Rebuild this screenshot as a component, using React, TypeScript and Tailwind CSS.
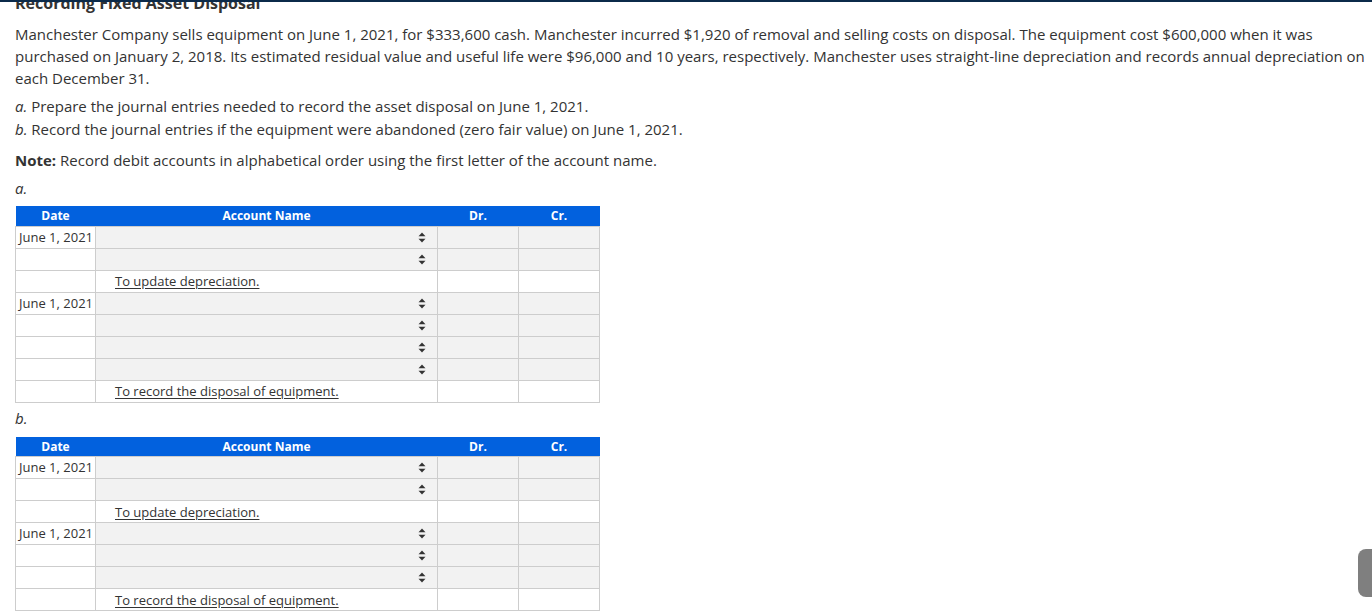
import React from "react";

type Row = { date?: string; kind: "select" | "memo"; memo?: string };

const tableA: Row[] = [
  { date: "June 1, 2021", kind: "select" },
  { kind: "select" },
  { kind: "memo", memo: "To update depreciation." },
  { date: "June 1, 2021", kind: "select" },
  { kind: "select" },
  { kind: "select" },
  { kind: "select" },
  { kind: "memo", memo: "To record the disposal of equipment." },
];

const tableB: Row[] = [
  { date: "June 1, 2021", kind: "select" },
  { kind: "select" },
  { kind: "memo", memo: "To update depreciation." },
  { date: "June 1, 2021", kind: "select" },
  { kind: "select" },
  { kind: "select" },
  { kind: "memo", memo: "To record the disposal of equipment." },
];

const Arrows = () => (
  <svg width="8" height="11" viewBox="0 0 8 11" className="block">
    <path d="M4 0.5 L7.5 4.3 L0.5 4.3 Z" fill="#333" />
    <path d="M4 10.5 L7.5 6.7 L0.5 6.7 Z" fill="#333" />
  </svg>
);

function Journal({ rows }: { rows: Row[] }) {
  return (
    <table className="border-collapse w-[584px] table-fixed text-[13px] text-[#333]">
      <colgroup>
        <col className="w-[80px]" />
        <col className="w-[342px]" />
        <col className="w-[81px]" />
        <col className="w-[81px]" />
      </colgroup>
      <thead>
        <tr className="bg-[#0261de] text-white h-[20px]">
          <th className="font-bold text-[12px] leading-[19px] p-0 text-center">Date</th>
          <th className="font-bold text-[12px] leading-[19px] p-0 text-center">Account Name</th>
          <th className="font-bold text-[12px] leading-[19px] p-0 text-center">Dr.</th>
          <th className="font-bold text-[12px] leading-[19px] p-0 text-center">Cr.</th>
        </tr>
      </thead>
      <tbody>
        {rows.map((r, i) => (
          <tr key={i} className="h-[22px]">
            <td className="border border-[#cdcdcd] bg-white px-[3px] p-0 leading-[19px] whitespace-nowrap">
              {r.date ?? ""}
            </td>
            {r.kind === "select" ? (
              <td className="border border-[#cdcdcd] bg-[#f2f2f2] p-0">
                <div className="flex justify-end pr-[11px]">
                  <Arrows />
                </div>
              </td>
            ) : (
              <td className="border border-[#cdcdcd] bg-white p-0 pl-[19px] leading-[18px]">
                <span className="underline underline-offset-2">{r.memo}</span>
              </td>
            )}
            <td className={`border border-[#cdcdcd] p-0 ${r.kind === "select" ? "bg-[#f2f2f2]" : "bg-white"}`}></td>
            <td className={`border border-[#cdcdcd] p-0 ${r.kind === "select" ? "bg-[#f2f2f2]" : "bg-white"}`}></td>
          </tr>
        ))}
      </tbody>
    </table>
  );
}

export default function App() {
  return (
    <div
      className="relative w-[1372px] h-[612px] overflow-hidden bg-white text-[#333]"
      style={{ fontFamily: '"Open Sans", "Noto Sans", sans-serif' }}
    >
      <div className="pl-[15px]">
        <h2 className="text-[16px] font-bold leading-[22px] -mt-[8px] text-[#333]">
          Recording Fixed Asset Disposal
        </h2>
        <p className="mt-[9px] w-[1356px] text-[15px] leading-[22px]">
          Manchester Company sells equipment on June 1, 2021, for $333,600 cash. Manchester incurred $1,920 of removal and selling costs on disposal. The equipment cost $600,000 when it was purchased on January 2, 2018. Its estimated residual value and useful life were $96,000 and 10 years, respectively. Manchester uses straight-line depreciation and records annual depreciation on each December 31.
        </p>
        <div className="mt-[6px] text-[15px] leading-[23px]">
          <div>
            <i>a.</i> Prepare the journal entries needed to record the asset disposal on June 1, 2021.
          </div>
          <div>
            <i>b.</i> Record the journal entries if the equipment were abandoned (zero fair value) on June 1, 2021.
          </div>
        </div>
        <p className="mt-[8px] text-[15px] leading-[22px]">
          <b>Note:</b> Record debit accounts in alphabetical order using the first letter of the account name.
        </p>
        <div className="mt-[6px] text-[15px] leading-[22px] italic">a.</div>
        <div className="mt-[7px]">
          <Journal rows={tableA} />
        </div>
        <div className="mt-[4px] text-[15px] leading-[22px] italic">b.</div>
        <div className="mt-[8px]">
          <Journal rows={tableB} />
        </div>
      </div>
      <div className="absolute top-0 left-0 right-0 h-[2px] bg-[#0b2a4a]" />
      <div className="absolute right-0 top-[549px] w-[14px] h-[48px] rounded-l-[8px] bg-[#7f7f7f]" />
    </div>
  );
}
